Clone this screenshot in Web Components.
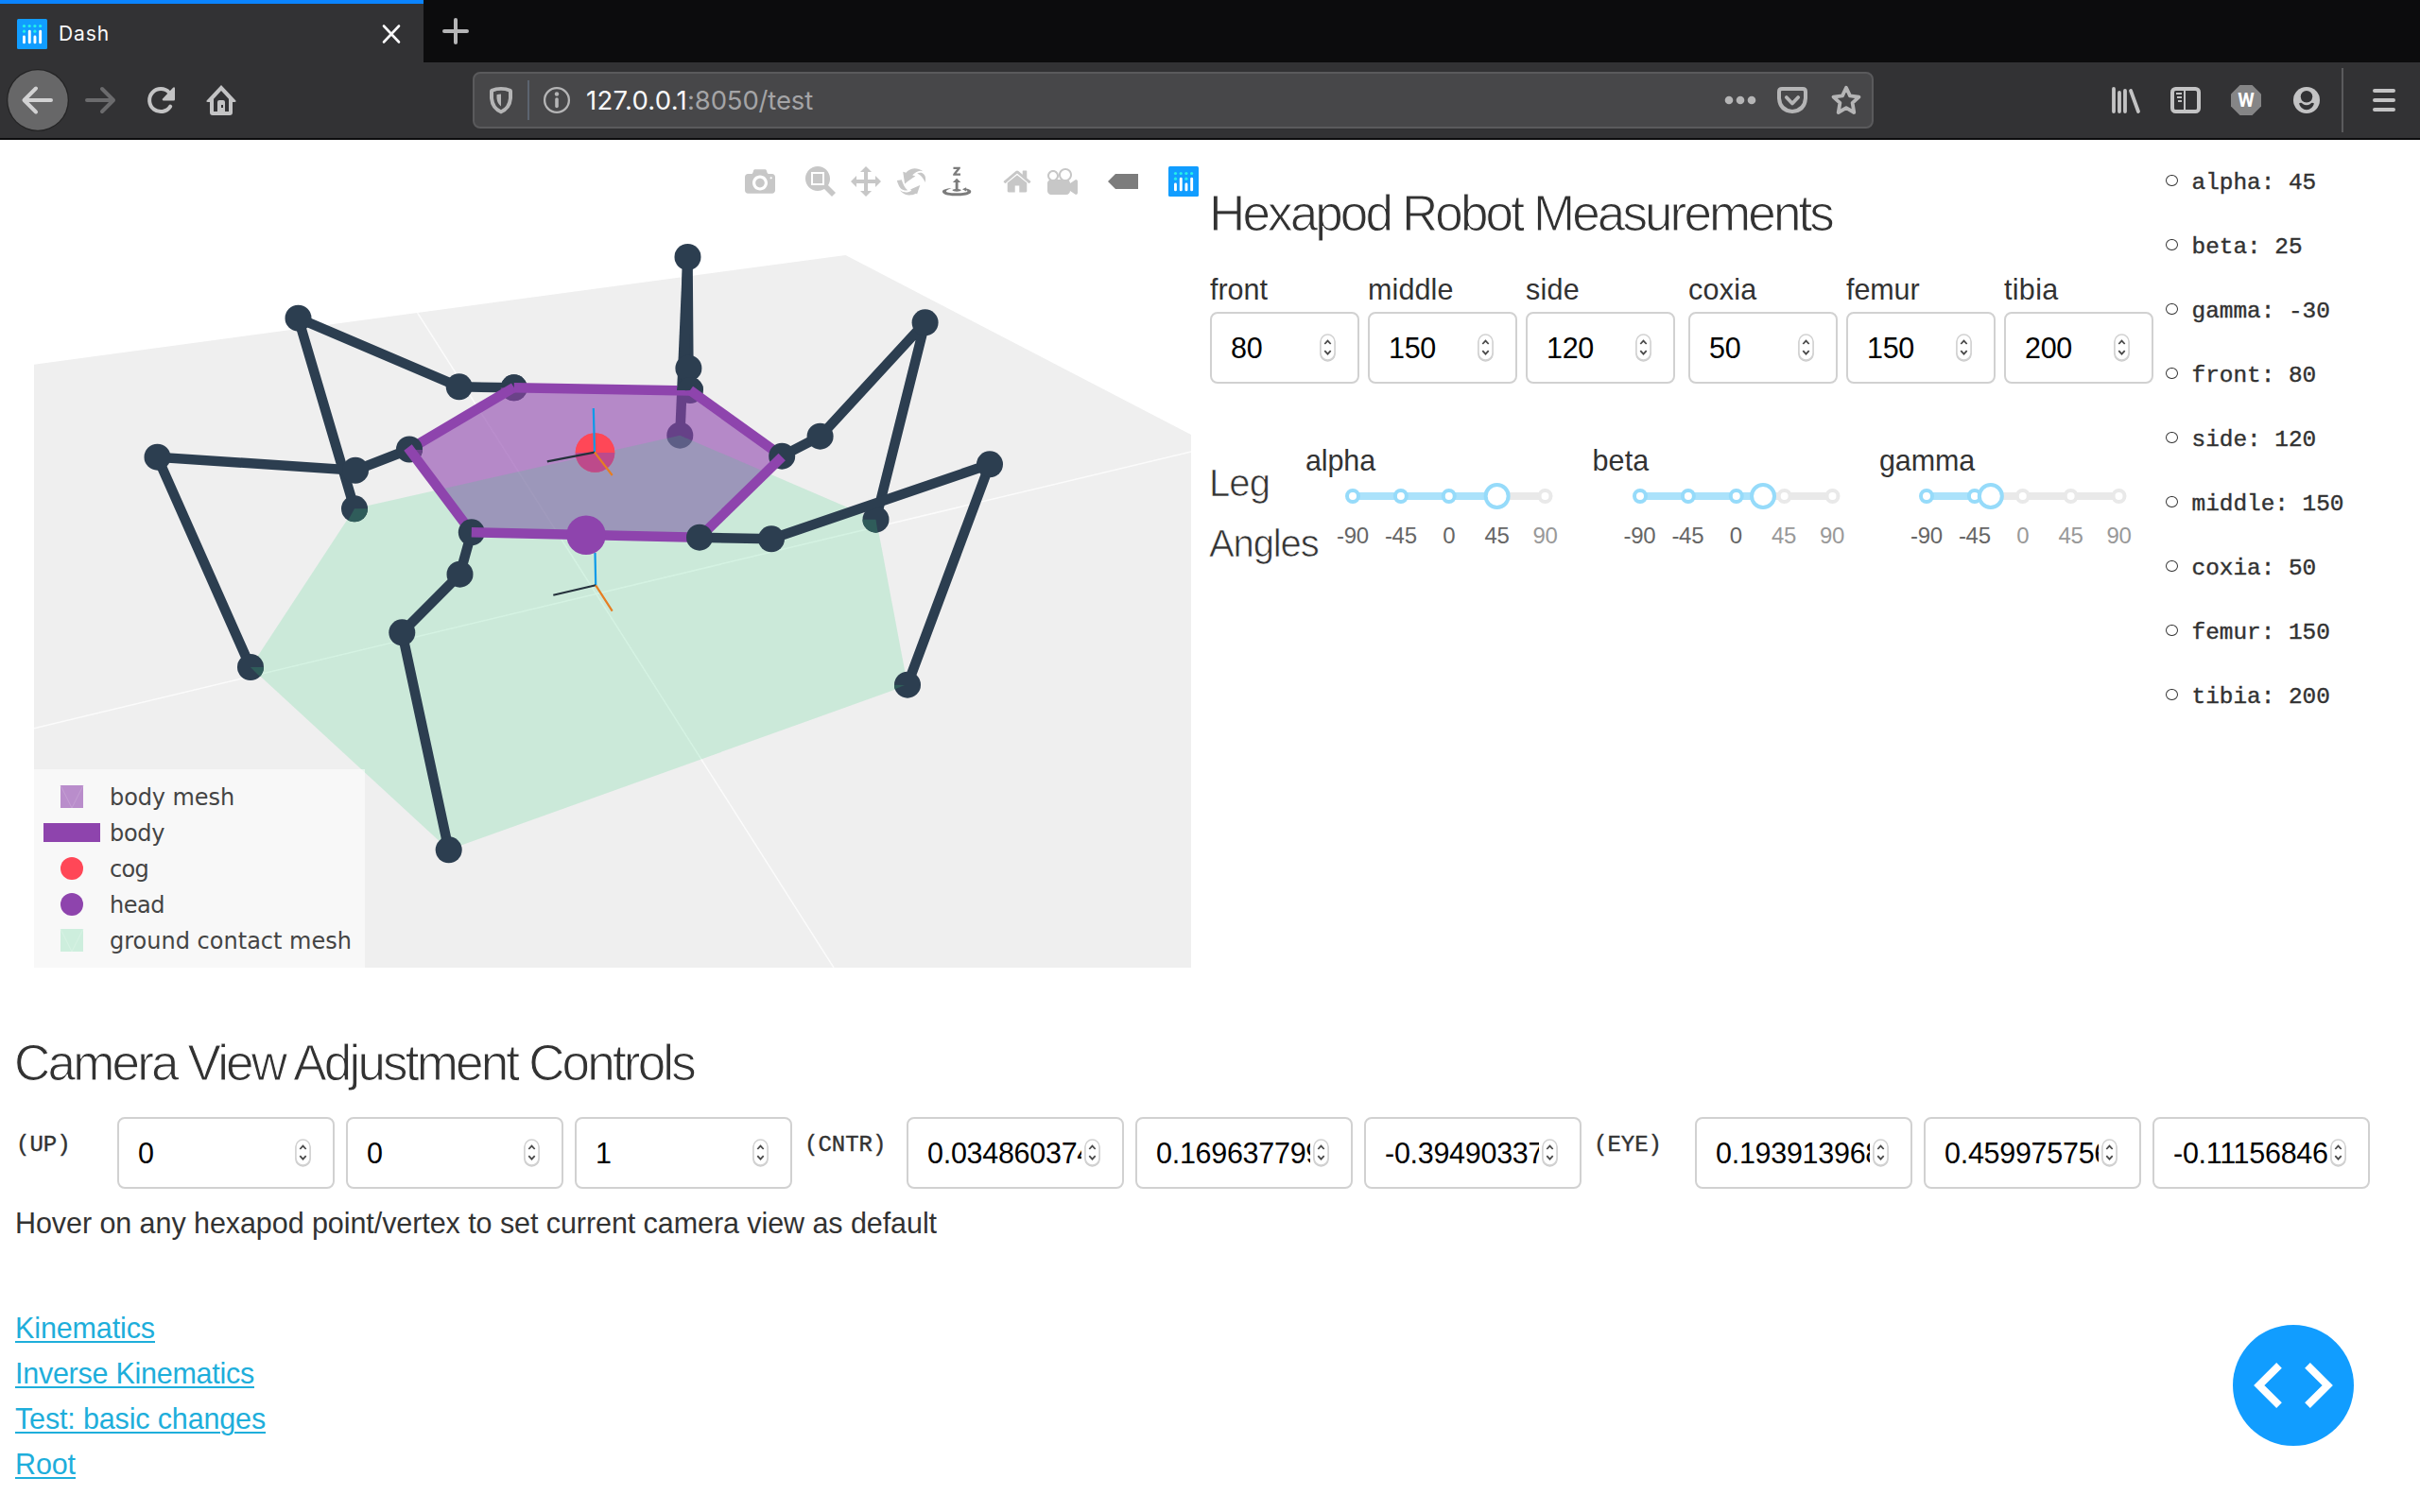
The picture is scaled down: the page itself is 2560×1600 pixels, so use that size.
<!DOCTYPE html>
<html lang="en">
<head>
<meta charset="utf-8">
<title>Dash</title>
<style>
html,body{margin:0;padding:0;background:#fff}
body{width:2560px;height:1600px;overflow:hidden;position:relative;font-family:"Liberation Sans",Arial,sans-serif;font-size:30.5px;line-height:48px;color:#323232}
.top{display:grid;grid-template-columns:1280px 1000px 280px;height:932px}
.right{padding-top:48px}
.fields{display:flex;gap:9px;margin-top:26px}
.fields measure-field:nth-child(4){margin-left:5px}
.angles{display:flex;margin-top:57px}
.leg{width:101px;flex:none;padding-top:16px;font-size:40px;line-height:64px}
.camera{padding:15px 16px 0}
.row{display:flex;gap:12px;margin-top:27px;align-items:flex-start}
.tag{font:24px/48px "Liberation Mono",monospace;padding:6px 0 0 1px;width:96px;flex:none;box-sizing:border-box;-webkit-text-stroke:.4px #323232}
.tag.c{margin:0 1px 0 0}
.tag.e{margin:0 2px 0 -1px;width:95px;padding-left:2px}
.hint{margin-top:12px}
.links{margin-top:63px;display:flex;flex-direction:column;align-items:flex-start}
</style>
</head>
<body>
<browser-chrome></browser-chrome>
<div class="top">
  <hexapod-graph></hexapod-graph>
  <div class="right">
    <section-title w="659">Hexapod Robot Measurements</section-title>
    <div class="fields">
      <measure-field label="front" w="61" value="80"></measure-field>
      <measure-field label="middle" w="90.5" value="150"></measure-field>
      <measure-field label="side" w="57" value="120"></measure-field>
      <measure-field label="coxia" w="72.5" value="50"></measure-field>
      <measure-field label="femur" w="77.5" value="150"></measure-field>
      <measure-field label="tibia" w="57.5" value="200"></measure-field>
    </div>
    <div class="angles">
      <div class="leg"><thin-text w="64">Leg</thin-text><thin-text w="115.5">Angles</thin-text></div>
      <angle-slider label="alpha" w="74" value="45"></angle-slider>
      <angle-slider label="beta" w="60" value="25"></angle-slider>
      <angle-slider label="gamma" w="101" value="-30"></angle-slider>
    </div>
  </div>
  <value-list items="alpha: 45|beta: 25|gamma: -30|front: 80|side: 120|middle: 150|coxia: 50|femur: 150|tibia: 200"></value-list>
</div>
<div class="camera">
  <section-title w="719">Camera View Adjustment Controls</section-title>
  <div class="row">
    <div class="tag">(UP)</div>
    <number-box value="0"></number-box><number-box value="0"></number-box><number-box value="1"></number-box>
    <div class="tag c">(CNTR)</div>
    <number-box value="0.034860374"></number-box><number-box value="0.169637799"></number-box><number-box value="-0.39490337"></number-box>
    <div class="tag e">(EYE)</div>
    <number-box value="0.193913968"></number-box><number-box value="0.459975756"></number-box><number-box value="-0.11156846"></number-box>
  </div>
  <div class="hint"><fit-text w="975">Hover on any hexapod point/vertex to set current camera view as default</fit-text></div>
  <div class="links">
    <nav-link w="148">Kinematics</nav-link>
    <nav-link w="253">Inverse Kinematics</nav-link>
    <nav-link w="265">Test: basic changes</nav-link>
    <nav-link w="64">Root</nav-link>
  </div>
</div>
<debug-button></debug-button>

<script>
class Base extends HTMLElement {
  connectedCallback() {
    if (this.shadowRoot) return;
    this.attachShadow({mode: 'open'}).innerHTML = this.render();
    this.ready && this.ready();
  }
  a(n) { return this.getAttribute(n); }
}

/* Plotly mark on its blue tile, drawn in a 32 unit box */
const logo = `<rect width="32" height="32" rx="1.5" fill="#119dff"/>
<g fill="#25f0e8"><circle cx="7.5" cy="7.5" r="1.6"/><circle cx="13.2" cy="7.5" r="1.6"/><circle cx="18.9" cy="7.5" r="1.6"/><circle cx="24.6" cy="7.5" r="1.6"/><circle cx="7.5" cy="13.2" r="1.6"/><circle cx="18.9" cy="13.2" r="1.6"/></g>
<g fill="#fff"><rect x="6" y="17.5" width="2.9" height="8.8" rx="1.4"/><rect x="11.8" y="11.7" width="2.9" height="14.6" rx="1.4"/><rect x="17.5" y="17.5" width="2.9" height="8.8" rx="1.4"/><rect x="23.2" y="11.7" width="2.9" height="14.6" rx="1.4"/></g>`;

class BrowserChrome extends Base {
  render() {
    return `<style>
:host{display:block;height:148px;background:#323234;font-family:Inter,"Noto Sans",sans-serif;box-sizing:border-box;border-bottom:2px solid #0c0c0d;line-height:1}
svg{display:block;flex:none}
.tabs{height:66px;background:#0c0c0d;display:flex;align-items:center;box-sizing:border-box}
.tab{width:448px;height:66px;background:#323234;border-top:4px solid #0a84ff;box-sizing:border-box;display:flex;align-items:center;padding:2px 22px 0 18px;color:#f9f9fa;font-size:21px}
.tab fit-text{margin:0 0 2px 12px}
.x{margin-left:auto}
.plus{margin-left:18px}
.bar{height:80px;display:flex;align-items:center}
.url{width:1482px;height:60px;box-sizing:border-box;border:2px solid #5a5a5c;border-radius:8px;background:#474749;display:flex;align-items:center;margin-left:250px;font-size:27.5px;color:#f9f9fa;padding:0 10px 0 14px}
.url fit-text{padding-top:2px}
.url span{color:#a4a4a6}
.sep{width:2px;height:42px;background:#5c6470;margin:0 14px 0 14px}
.div{width:2px;height:68px;background:#5b5b5d;margin-left:23px}
</style>
<div class="tabs"><div class="tab"><svg width="32" height="32">${logo}</svg><fit-text w="54">Dash</fit-text>
<svg class="x" width="24" height="24" fill="none" stroke="#f9f9fa" stroke-width="2.6" stroke-linecap="round"><path d="M4 3.5 20 20.5M20 3.5 4 20.5"/></svg></div>
<svg class="plus" width="32" height="32" stroke="#b5b5b6" stroke-width="4" stroke-linecap="round"><path d="M16 4V28M4 16H28"/></svg></div>
<div class="bar">
<svg width="72" height="72" style="margin-left:4px"><circle cx="36" cy="36" r="33" fill="#242425"/><circle cx="36" cy="36" r="31.7" fill="#676768"/><path d="M50 36H22M34 23.5 21.5 36 34 48.5" fill="none" stroke="#d2d2d3" stroke-width="4" stroke-linecap="round" stroke-linejoin="round"/></svg>
<svg width="36" height="36" style="margin-left:12px"><path d="M4 18H31M20 6 32 18 20 30" fill="none" stroke="#6b6b6d" stroke-width="4" stroke-linecap="round" stroke-linejoin="round"/></svg>
<svg width="34" height="32" style="margin-left:30px"><path d="M26.2 22.6A12 12 0 1 1 25 8" fill="none" stroke="#c3c3c4" stroke-width="4" stroke-linecap="round"/><path d="M31 3.2V15.2Q31 16.5 29.7 16.5H18.5Q17 15.8 18 14.6L28.8 3Q30.5 1.6 31 3.2Z" fill="#c3c3c4"/></svg>
<svg width="32" height="32" style="margin-left:30px"><path fill="#c3c3c4" fill-rule="evenodd" d="M16 0 31.2 16.3Q32.5 18 30 18H28V29Q28 32 25 32H7Q4 32 4 29V18H2Q-.5 18 .8 16.3ZM16 6 8 14.8V28H12V18Q12 16 14 16H18Q20 16 20 18V28H24V14.8ZM16 21V24H18V21Z"/></svg>
<div class="url">
<svg width="28" height="32"><path fill="#b5b5b6" fill-rule="evenodd" d="M14 2Q20 2 24.5 4Q26 4.7 26 6.500V14Q25 26 14 30.500Q3 26 2 14V6.500Q2 4.700 3.500 4Q8 2 14 2ZM14 5.800Q9.500 5.800 6 7.200V14Q7 23 14 26.300Q21 23 22 14V7.200Q18.500 5.800 14 5.800ZM14 9.500V22.500Q10 19.500 9.500 14V10.200Q11.500 9.500 14 9.500Z"/></svg>
<div class="sep"></div>
<svg width="30" height="30" fill="none" stroke="#b5b5b6"><circle cx="15" cy="15" r="12.900" stroke-width="2.300"/><path d="M15 14V21.500" stroke-width="3.600" stroke-linecap="round"/><circle cx="15" cy="8.500" r="2.200" fill="#b5b5b6" stroke="none"/></svg>
<fit-text w="107" style="margin-left:16px">127.0.0.1</fit-text><span><fit-text w="133">:8050/test</fit-text></span>
<svg width="36" height="12" fill="#b5b5b6" style="margin-left:auto"><circle cx="6" cy="6" r="4.300"/><circle cx="18" cy="6" r="4.300"/><circle cx="30" cy="6" r="4.300"/></svg>
<svg width="32" height="32" style="margin-left:21px"><path d="M5 4H27Q30 4 30 7V14Q29 27 16 28Q3 27 2 14V7Q2 4 5 4Z" fill="none" stroke="#b5b5b6" stroke-width="4"/><path d="M3 3H29V6H3Z" fill="#b5b5b6"/><path d="M9.800 13 16 19.500 22.200 13" fill="none" stroke="#b5b5b6" stroke-width="3.800" stroke-linecap="round" stroke-linejoin="round"/></svg>
<svg width="34" height="34" style="margin-left:24px"><path d="M17 3.800 21 12.400 30.500 13.600 23.600 19.900 25.300 30 17 25.200 8.700 30 10.400 19.900 3.500 13.600 13 12.400Z" fill="none" stroke="#b5b5b6" stroke-width="3.800" stroke-linejoin="round"/></svg>
</div>
<svg width="32" height="32" style="margin-left:251px" stroke="#c3c3c4" stroke-width="3.800" stroke-linecap="round"><path d="M3 4V28M9 8V28M15 6V28M21 6 29 28"/></svg>
<svg width="32" height="28" style="margin-left:31px"><rect x="2" y="2" width="28" height="24" rx="3.500" fill="none" stroke="#c3c3c4" stroke-width="4"/><path d="M15 3V25" stroke="#c3c3c4" stroke-width="2"/><path d="M6 7H12M7 11H12M8 15H12" stroke="#c3c3c4" stroke-width="2"/></svg>
<svg width="32" height="32" style="margin-left:32px"><path d="M9.500 0H22.500L32 9.500V22.500L22.500 32H9.500L0 22.500V9.500Z" fill="#858586"/><text x="16" y="22.500" text-anchor="middle" font-family="Roboto,sans-serif" font-weight="700" font-size="20" fill="#fff">W</text></svg>
<svg width="28" height="28" style="margin-left:34px"><circle cx="14" cy="14" r="14" fill="#c3c3c4"/><path d="M14 4A6.200 6.200 0 0 1 20.200 10.200Q20 16 14 16.500Q8 16 7.800 10.200A6.200 6.200 0 0 1 14 4Z" fill="#323234"/><path d="M6 17.500Q8.500 16 10 18Q14 20.500 18 18Q19.500 16 22 17.500Q20 24 14 24.300Q8 24 6 17.500Z" fill="#323234"/></svg>
<div class="div"></div>
<svg width="32" height="28" style="margin-left:27px" stroke="#c3c3c4" stroke-width="4" stroke-linecap="round"><path d="M6 4H26M6 14H26M6 24H26"/></svg>
</div>`;
  }
}

const ICONS = {
  camera: 'm500 450c-83 0-150-67-150-150 0-83 67-150 150-150 83 0 150 67 150 150 0 83-67 150-150 150z m400 150h-120c-16 0-34 13-39 29l-31 93c-6 15-23 28-40 28h-340c-16 0-34-13-39-28l-31-94c-6-15-23-28-40-28h-120c-55 0-100-45-100-100v-450c0-55 45-100 100-100h800c55 0 100 45 100 100v450c0 55-45 100-100 100z m-400-550c-138 0-250 112-250 250 0 138 112 250 250 250 138 0 250-112 250-250 0-138-112-250-250-250z m365 380c-19 0-35 16-35 35 0 19 16 35 35 35 19 0 35-16 35-35 0-19-16-35-35-35z',
  zoom: 'm1000-25l-250 251c40 63 63 138 63 218 0 224-182 406-407 406-224 0-406-182-406-406s183-406 407-406c80 0 155 22 218 62l250-250 125 125z m-812 250l0 438 437 0 0-438-437 0z m62 375l313 0 0-312-313 0 0 312z',
  pan: 'm1000 350l-187 188 0-125-250 0 0 250 125 0-188 187-187-187 125 0 0-250-250 0 0 125-188-188 186-187 0 125 252 0 0-250-125 0 187-188 188 188-125 0 0 250 250 0 0-126 187 188z',
  orbit: 'm922 660c-5 4-9 7-14 11-359 263-580-31-580-31l-102 28 58-400c0 1 1 1 2 2 118 108 351 249 351 249s-62 27-100 42c88 83 222 183 347 122 16-8 30-17 44-27-2 1-4 2-6 4z m36-329c0 0 64 229-88 296-62 27-124 14-175-11 157-78 225-208 249-266 8-19 11-31 11-31 2 5 6 15 11 32-5-13-8-20-8-20z m-775-239c70-31 117-50 198-32-121 80-199 346-199 346l-96-15-58-12c0 0 55-226 155-287z m603 133l-317-139c0 0 4-4 19-14 7-5 24-15 24-15s-177-147-389 4c235-287 536-112 536-112l31-22 100 299-4-1z m-298-153c6-4 14-9 24-15 0 0-17 10-24 15z',
  turn: 'm833 5l-17 108v41l-130-65 130-66c0 0 0 38 0 39 0-1 36-14 39-25 4-15-6-22-16-30-15-12-39-16-56-20-90-22-187-23-279-23-261 0-341 34-353 59 3 60 228 110 228 110-140-8-351-35-351-116 0-120 293-142 474-142 155 0 477 22 477 142 0 50-74 79-163 96z m-374 94c-58-5-99-21-99-40 0-24 65-43 144-43 79 0 143 19 143 43 0 19-42 34-98 40v216h87l-132 135-133-135h88v-216z m167 515h-136v1c16 16 31 34 46 52l84 109v54h-230v-71h124v-1c-16-17-28-32-44-51l-89-114v-51h245v72z',
  home: 'm786 296v-267q0-15-11-26t-25-10h-214v214h-143v-214h-214q-15 0-25 10t-11 26v267q0 1 0 2t0 2l321 264 321-264q1-1 1-4z m124 39l-34-41q-5-5-12-6h-2q-7 0-12 3l-386 322-386-322q-7-4-13-4-7 2-12 7l-35 41q-4 5-3 13t6 12l401 334q18 15 42 15t43-15l136-114v109q0 8 5 13t13 5h107q8 0 13-5t5-13v-227l122-102q5-5 6-12t-4-13z',
  movie: 'm938 413l-188-125c0 37-17 71-44 94 64 38 107 107 107 187 0 121-98 219-219 219-121 0-219-98-219-219 0-61 25-117 66-156h-115c30 33 49 76 49 125 0 103-84 187-187 187s-188-84-188-187c0-57 26-107 65-141-38-22-65-62-65-109v-250c0-70 56-126 125-126h500c69 0 125 56 125 126l188-126c34 0 62 28 62 63v375c0 35-28 63-62 63z m-750 0c-69 0-125 56-125 125s56 125 125 125 125-56 125-125-56-125-125-125z m406-1c-87 0-157 70-157 157 0 86 70 156 157 156s156-70 156-156-70-157-156-157z',
  tip: 'm375 725l0 0-375-375 375-374 0-1 1125 0 0 750-1125 0z'
};

class ModeBar extends Base {
  render() {
    const i = (n, gap, on, w = 1000) => `<svg width="32" height="32" viewBox="0 0 ${w} 1000" style="margin-left:${gap}px"><path transform="matrix(1 0 0 -1 0 850)" fill="${on ? '#7c7c7c' : '#c7c7c7'}" d="${ICONS[n]}"/></svg>`;
    return `<style>:host{display:flex;height:92px;box-sizing:border-box;padding:28px 12px 0 0;justify-content:flex-end}svg{display:block;flex:none}</style>
${i('camera', 0)}${i('zoom', 32)}${i('pan', 16)}${i('orbit', 16)}${i('turn', 16, 1)}${i('home', 32, 0, 928.6)}${i('movie', 16)}${i('tip', 32, 1, 1500)}
<svg width="32" height="32" style="margin-left:32px">${logo}</svg>`;
  }
}

class GraphLegend extends Base {
  render() {
    const row = (t, w, s) => `<div><svg width="70" height="38">${s}</svg><fit-text w="${w}">${t}</fit-text></div>`;
    return `<style>:host{display:block;width:350px;height:210px;box-sizing:border-box;padding:10px 0 0 10px;background:rgba(255,255,255,.56);font:24px/38px "DejaVu Sans",sans-serif;color:#444}div{display:flex;height:38px}svg{display:block;flex:none}fit-text{margin-top:1px}</style>
${row('body mesh', 132, '<rect x="18" y="7" width="24" height="24" fill="#b98dcb"/><path d="M18 7 30 31 42 7" fill="none" stroke="#c7a3d5" stroke-width=".8"/>')}
${row('body', 58, '<rect y="9" width="60" height="20" fill="#8e44ad"/>')}
${row('cog', 41, '<circle cx="30" cy="19" r="12" fill="#ff4757"/>')}
${row('head', 58, '<circle cx="30" cy="19" r="12" fill="#8e44ad"/>')}
${row('ground contact mesh', 256, '<rect x="18" y="7" width="24" height="24" fill="#cdeedd"/><path d="M18 7 30 31 42 7" fill="none" stroke="#d9f2e5" stroke-width=".8"/>')}`;
  }
}

class HexapodGraph extends Base {
  render() {
    const dot = (x, y, r = 14, c = '#2c3e50') => `<circle cx="${x}" cy="${y}" r="${r}" fill="${c}"/>`;
    const leg = d => `<path d="${d}" fill="none" stroke="#2c3e50" stroke-width="10.500"/>`;
    const bar = d => `<path d="${d}" fill="none" stroke="#8e44ad" stroke-width="10.500"/>`;
    /* part of a joint seen through a translucent mesh */
    const part = (id, x, y, r, pts, c) => `<clipPath id="${id}"><circle cx="${x}" cy="${y}" r="${r}"/></clipPath><polygon clip-path="url(#${id})" points="${pts}" fill="${c}"/>`;
    return `<style>:host{display:block;width:1280px;height:932px;position:relative}svg{display:block}graph-legend{position:absolute;left:36px;top:666px}</style>
<mode-bar></mode-bar>
<svg width="1280" height="840" viewBox="0 240 1280 840">
<path d="M36 385.700 894.500 270 1260 460V1024H36Z" fill="#efefef"/>
<path d="M441.600 331 882 1024M36 770.700 1260 478" stroke="#fbfbfb" stroke-width="1.500" fill="none"/>
${leg('M727.500 272 719.300 460.700')}${dot(719.3, 460.7)}
${dot(543.7, 410.3)}${dot(730, 413)}
<path d="M543.700 410 730 413 827 483 740 569 499 563 433 475.500Z" fill="#8e44ad" fill-opacity=".6"/>
${dot(629.5, 479, 20.8, '#ff4757')}
<path d="M375 538.300 719.300 460.700 927 550 960 725 474.700 899.300 265 706Z" fill="rgb(58,209,129)" fill-opacity=".2"/>
${part('cf', 629.5, 479, 20.8, '600,450 660,450 660,479 600,479', '#ff4757')}
${part('cg', 629.5, 479, 20.8, '600,479 660,479 660,510 600,510', '#bd4a8b')}
${part('p3', 543.7, 410.3, 14, '525,396 563,396 563,410.300 525,410.300', '#2c3e50')}
${leg('M375 538.300 315.500 336.700 485.700 409.300 543.700 410.300')}
${dot(375, 538.3)}${dot(315.5, 336.7)}${dot(485.7, 409.3)}
${part('p4', 375, 538.3, 14, '375,538.300 395,538.300 395,560 363,560', '#2f5c5a')}
${part('p3c', 543.7, 410.3, 14, '525,410.300 563,410.300 563,430 525,430', '#6a4288')}
${bar('M433 475.500 543.700 410')}${bar('M543.700 410.300 730 413.500')}
${leg('M265 706 166.500 483.700 376 497.700 433 475.500')}
${dot(265, 706)}${dot(166.5, 483.7)}${dot(376, 497.7)}${dot(433, 475.5)}
${part('p7', 433, 475.5, 14, '434,476 450,476 450,492 445,492', '#6a4288')}
${part('p11', 265, 706, 14, '265,706 281,706 281,722', '#2f5c5a')}
${bar('M431.500 473.500 498.800 563.300')}
${leg('M498.800 563.300 486.500 607.700 425.300 669.300 474.700 899.300')}
${dot(498.8, 563.3)}${dot(486.5, 607.7)}${dot(425.3, 669.3)}${dot(474.7, 899.3)}
${leg('M727.500 272 728.400 389.700 730 413')}
<path d="M727 272 723.500 413" stroke="#2c3e50" stroke-width="10"/>
${dot(727.5, 272)}${dot(728.4, 389.7)}
${part('q3', 730, 413, 14, '710,395 750,395 750,413 710,413', '#2c3e50')}
${bar('M730 413 827.200 482.700')}
${leg('M827.200 482.700 867.600 461.700 978.600 341.300 926.500 549.700')}
${dot(827.2, 482.7)}${dot(867.6, 461.7)}${dot(978.6, 341.3)}${dot(926.5, 549.7)}
${part('q8', 926.5, 549.7, 14, '910,549.700 926.500,549.700 929,566 910,566', '#2f5c5a')}
${bar('M827.200 483.500 740 568.700')}
${bar('M498.800 563.300 740 568.700')}
${leg('M740 568.700 816 570.300 1047 491.300 960 724.700')}
${dot(740, 568.7)}${dot(816, 570.3)}${dot(1047, 491.3)}${dot(960, 724.7)}
${part('q12', 960, 724.7, 14, '945,724.700 957,725 945,730', '#2f5c5a')}
<g fill="none" stroke-width="2.200">
<path d="M627.800 432 629 478.700M629.500 585 630.200 619.300" stroke="#0c9ae8"/>
<path d="M629 478.700 578.800 488.300M630.200 619.300 585.300 629.700" stroke="#25313c"/>
<path d="M629 478.700 647.700 503M630.200 619.300 647.700 646.700" stroke="#e67e22"/></g>
${dot(620, 566.3, 20.8, '#8e44ad')}
</svg>
<graph-legend></graph-legend>`;
  }
}

class ThinText extends Base {
  render() {
    return `<style>:host{display:block;white-space:nowrap;margin-left:-1px;-webkit-text-stroke:.7px #fff}</style><fit-text w="${this.a('w')}">${this.textContent}</fit-text>`;
  }
}
class SectionTitle extends Base {
  render() {
    return `<style>:host{display:block;font-size:53px;line-height:60px;height:60px;white-space:nowrap;margin-left:-1px;-webkit-text-stroke:1px #fff}</style><fit-text w="${this.a('w')}">${this.textContent}</fit-text>`;
  }
}

class NumberBox extends Base {
  render() {
    return `<style>:host{display:flex;width:230px;height:76px;box-sizing:border-box;border:2px solid #d1d1d1;border-radius:8px;background:#fff;align-items:center;padding:0 23px 0 20px;color:#000;font-size:30.500px;line-height:73px;letter-spacing:-.28px;flex:none}
span{flex:1;overflow:hidden;white-space:nowrap;min-width:0;height:72px;margin-right:3px}svg{display:block;flex:none}</style>
<span>${this.a('value')}</span><svg width="17" height="32" fill="none"><rect x="1" y="3" width="15" height="27" rx="7.500" stroke="#ccc" stroke-width="1.500"/><rect x="1" y="2" width="15" height="27" rx="7.500" fill="#fff" stroke="#d2d2d2" stroke-width="1.500"/><path d="M5.300 12 8.500 8.600 11.700 12M5.300 19.200 8.500 22.600 11.700 19.200" stroke="#4a4a4a" stroke-width="1.800"/></svg>`;
  }
}
class MeasureField extends Base {
  render() {
    return `<style>:host{display:block;width:158px}number-box{width:158px}div{height:48px}</style><div><fit-text w="${this.a('w')}">${this.a('label')}</fit-text></div><number-box value="${this.a('value')}"></number-box>`;
  }
}
class AngleSlider extends Base {
  render() {
    const v = +this.a('value'), L = 203.5, X = 20, hx = X + (v + 90) / 180 * L;
    const marks = [-90, -45, 0, 45, 90];
    return `<style>:host{display:block;width:303.500px;flex:none}.l{height:48px}svg{display:block;margin-left:30px}.m{display:flex;margin:14px 0 0 24.500px;font-size:24px;line-height:24px;letter-spacing:-.3px;color:#999}.m span{width:50.875px;text-align:center;flex:none}.m .on{color:#666}</style>
<div class="l"><fit-text w="${this.a('w')}">${this.a('label')}</fit-text></div>
<svg width="244" height="30"><rect x="${X}" y="10" width="${L}" height="8" fill="#e9e9e9"/><rect x="${X}" y="10" width="${hx - X}" height="8" fill="#abe2fb"/>
${marks.map((m, i) => `<circle cx="${X + i * L / 4}" cy="14" r="6" fill="#fff" stroke="${m <= v ? '#96dbfa' : '#e9e9e9'}" stroke-width="4"/>`).join('')}
<circle cx="${hx}" cy="14" r="12" fill="#fff" stroke="#96dbfa" stroke-width="4"/></svg>
<div class="m">${marks.map(m => `<span class="${m <= v ? 'on' : ''}">${m}</span>`).join('')}</div>`;
  }
}
class ValueList extends Base {
  render() {
    return `<style>:host{display:block;padding:12px 0 0 11px;font:24.400px/68px "Liberation Mono",monospace;-webkit-text-stroke:.4px #323232}div{display:flex;align-items:center;height:68px;white-space:pre}i{width:10.500px;height:10px;border:1.200px solid #323232;border-radius:50%;margin:0 15px 7px 0}</style>
${this.a('items').split('|').map(t => `<div><i></i>${t}</div>`).join('')}`;
  }
}
class NavLink extends Base {
  render() {
    return `<style>:host{display:block;height:48px}a{color:#1eaedb;text-decoration:underline;text-decoration-thickness:2px;text-underline-offset:3px}</style><a href="#"><fit-text inline w="${this.a('w')}">${this.textContent}</fit-text></a>`;
  }
}
class DebugButton extends Base {
  render() {
    return `<style>:host{display:block;position:absolute;left:2362px;top:1402px}svg{display:block}</style><svg width="128" height="128"><circle cx="64" cy="64" r="64" fill="#119dff"/><path d="M49 42.800 27.800 64 49 85.200M79 42.800 100.200 64 79 85.200" fill="none" stroke="#fff" stroke-width="8"/></svg>`;
  }
}
/* Tracks a single line of text so that it fills the given width */
class FitText extends Base {
  render() {
    return `<style>:host{display:inline-block;white-space:nowrap}:host([inline]){display:inline}</style><span><slot></slot></span>`;
  }
  ready() {
    const s = this.shadowRoot.querySelector('span');
    const n = this.textContent.length, w = s.getBoundingClientRect().width;
    if (w) s.style.letterSpacing = ((+this.a('w') - w) / n).toFixed(3) + 'px';
  }
}
for (const [n, c] of Object.entries({
  'browser-chrome': BrowserChrome, 'mode-bar': ModeBar, 'graph-legend': GraphLegend, 'hexapod-graph': HexapodGraph,
  'thin-text': ThinText, 'section-title': SectionTitle, 'number-box': NumberBox, 'measure-field': MeasureField,
  'angle-slider': AngleSlider, 'value-list': ValueList, 'nav-link': NavLink, 'debug-button': DebugButton, 'fit-text': FitText
})) customElements.define(n, c);
</script>
</body>
</html>
